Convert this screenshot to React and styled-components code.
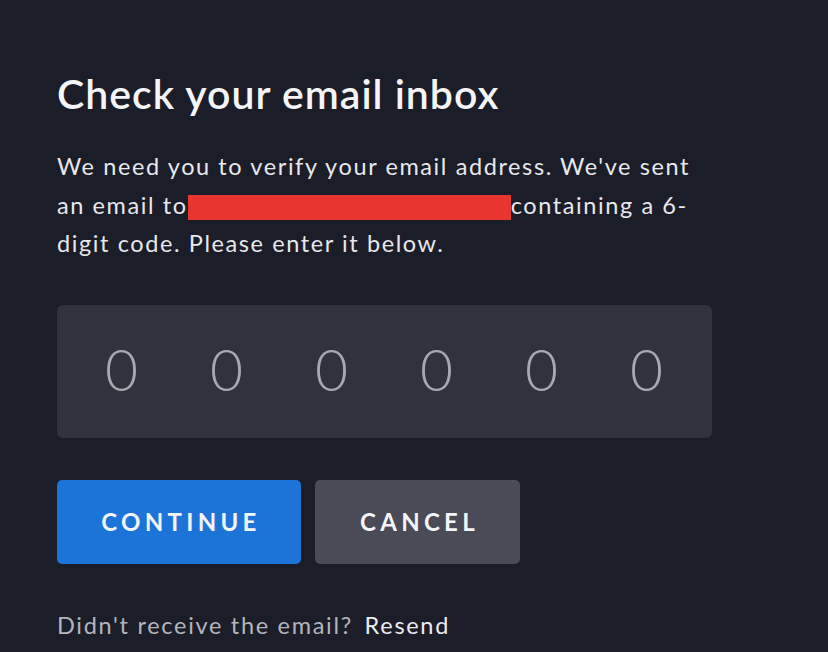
import React from 'react';
import styled, { createGlobalStyle } from 'styled-components';

const GlobalStyle = createGlobalStyle`
  html, body {
    margin: 0;
    padding: 0;
    background: #1b1d28;
  }
  body {
    font-family: Lato, "Noto Sans", sans-serif;
    color: #f2f2f4;
  }
`;

const Page = styled.div`
  width: 828px;
  height: 652px;
  overflow: hidden;
  box-sizing: border-box;
  padding: 70px 0 0 57px;
`;

const Title = styled.h1`
  margin: 0;
  font-size: 41px;
  font-weight: 600;
  line-height: 48px;
  letter-spacing: 1px;
  color: #f5f5f7;
`;

const Intro = styled.p`
  margin: 29px 0 0;
  width: 680px;
  font-size: 23.5px;
  line-height: 38.5px;
  letter-spacing: 1.6px;
  color: #e8e8ec;
  white-space: nowrap;
`;

const Redacted = styled.span`
  display: inline-block;
  width: 323px;
  height: 25px;
  background: #e8352f;
  vertical-align: -6px;
`;

const CodeBox = styled.div`
  margin-top: 42px;
  width: 655px;
  height: 133px;
  box-sizing: border-box;
  padding: 0 13px 4px 12px;
  border-radius: 6px;
  background: #30323d;
  display: grid;
  grid-template-columns: repeat(6, 1fr);
  align-items: center;
`;

const Digit = styled.span`
  text-align: center;
  font-size: 57px;
  font-weight: 300;
  color: #a8a9b0;
`;

const Actions = styled.div`
  margin-top: 42px;
  display: flex;
  gap: 14px;
`;

const Button = styled.button`
  width: ${(p) => p.$width}px;
  height: 84px;
  border: none;
  border-radius: 5px;
  background: ${(p) => (p.$primary ? '#1c73d8' : '#4a4b56')};
  color: #f4f5f8;
  font-family: Lato, "Noto Sans", sans-serif;
  font-size: 24px;
  font-weight: 700;
  letter-spacing: 4.3px;
  padding: 0 0 0 4px;
  cursor: pointer;
`;

const Footer = styled.p`
  margin: 46px 0 0;
  font-size: 23.5px;
  line-height: 30px;
  letter-spacing: 1.7px;
  color: #b4b5bc;
`;

const Resend = styled.a`
  margin-left: 4px;
  color: #ececf0;
  text-decoration: none;
  cursor: pointer;
`;

export default function App() {
  return (
    <>
      <GlobalStyle />
      <Page>
        <Title>Check your email inbox</Title>
        <Intro>
          We need you to verify your email address. We've sent
          <br />
          an email to<Redacted />containing a 6-
          <br />
          digit code. Please enter it below.
        </Intro>
        <CodeBox>
          {[0, 1, 2, 3, 4, 5].map((i) => (
            <Digit key={i}>0</Digit>
          ))}
        </CodeBox>
        <Actions>
          <Button $primary $width={244}>CONTINUE</Button>
          <Button $width={205}>CANCEL</Button>
        </Actions>
        <Footer>
          Didn't receive the email? <Resend>Resend</Resend>
        </Footer>
      </Page>
    </>
  );
}
